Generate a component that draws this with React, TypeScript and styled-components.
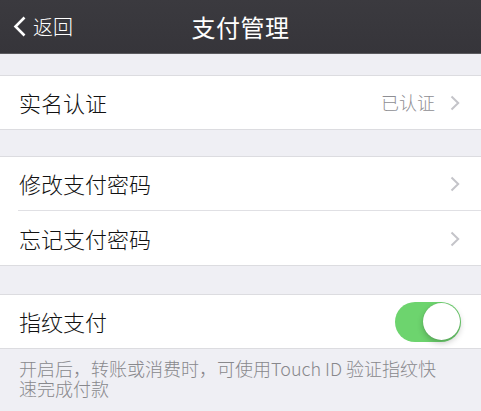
import React from "react";
import styled, { createGlobalStyle } from "styled-components";

const GlobalStyle = createGlobalStyle`
  html, body {
    margin: 0;
    padding: 0;
    background: #efeff4;
    font-family: "Noto Sans CJK SC", "Noto Sans", sans-serif;
  }
`;

const Page = styled.div`
  width: 481px;
  min-height: 411px;
  background: #efeff4;
  overflow: hidden;
`;

const NavBar = styled.div`
  height: 53px;
  background: linear-gradient(#3b3a3f, #36353a);
  border-bottom: 1px solid #5b5b5f;
  display: flex;
  align-items: center;
  justify-content: center;
  position: relative;
`;

const BackButton = styled.div`
  position: absolute;
  left: 13px;
  top: 0;
  bottom: 0;
  display: flex;
  align-items: center;
  gap: 6px;
  color: #ffffff;
  font-size: 20px;
  font-weight: 300;
`;

const Title = styled.div`
  color: #ffffff;
  font-size: 24px;
  font-weight: 400;
  letter-spacing: 0.5px;
`;

const Group = styled.div<{ $gap: number }>`
  margin-top: ${({ $gap }) => $gap}px;
  background: #ffffff;
  box-shadow: inset 0 1px 0 #dcdce0, inset 0 -1px 0 #dcdce0;
`;

const Row = styled.div<{ $divider?: boolean }>`
  height: 55px;
  padding: 0 21px 0 19px;
  display: flex;
  align-items: center;
  position: relative;
  ${({ $divider }) =>
    $divider &&
    `
    &::after {
      content: "";
      position: absolute;
      left: 18px;
      right: 0;
      bottom: 0;
      height: 1px;
      background: #e0e0e4;
    }
  `}
`;

const Label = styled.div`
  flex: 1;
  font-size: 22px;
  font-weight: 300;
  color: #111111;
  margin-top: -2px;
`;

const Detail = styled.div`
  font-size: 18px;
  font-weight: 300;
  color: #8e8e93;
  margin-right: 15px;
  margin-top: -2px;
`;

const Toggle = styled.div<{ $on: boolean }>`
  width: 66px;
  height: 40px;
  border-radius: 20px;
  background: ${({ $on }) => ($on ? "#6dd46e" : "#e5e5ea")};
  position: relative;
  margin-right: -1px;
`;

const Knob = styled.div<{ $on: boolean }>`
  position: absolute;
  top: 1px;
  left: ${({ $on }) => ($on ? "28px" : "1px")};
  width: 37px;
  height: 37px;
  border-radius: 50%;
  background: #ffffff;
  box-shadow: 0 3px 6px rgba(0, 0, 0, 0.22), 0 0 1px rgba(0, 0, 0, 0.2);
`;

const Footer = styled.div`
  padding: 9px 36px 0 19px;
  font-size: 18px;
  font-weight: 300;
  line-height: 20px;
  color: #88888c;
`;

const Chevron = () => (
  <svg width="10" height="16" viewBox="0 0 10 16">
    <path d="M1.5 1.5 L8.2 8 L1.5 14.5" fill="none" stroke="#c4c4c9" strokeWidth="2" />
  </svg>
);

const BackChevron = () => (
  <svg width="14" height="21" viewBox="0 0 14 21">
    <path d="M11.5 1.5 L2.5 10.5 L11.5 19.5" fill="none" stroke="#ffffff" strokeWidth="2.6" />
  </svg>
);

export default function App() {
  const [touchId, setTouchId] = React.useState(true);
  return (
    <Page>
      <GlobalStyle />
      <NavBar>
        <BackButton>
          <BackChevron />
          <span>返回</span>
        </BackButton>
        <Title>支付管理</Title>
      </NavBar>

      <Group $gap={21}>
        <Row>
          <Label>实名认证</Label>
          <Detail>已认证</Detail>
          <Chevron />
        </Row>
      </Group>

      <Group $gap={26}>
        <Row $divider>
          <Label>修改支付密码</Label>
          <Chevron />
        </Row>
        <Row>
          <Label>忘记支付密码</Label>
          <Chevron />
        </Row>
      </Group>

      <Group $gap={28}>
        <Row>
          <Label>指纹支付</Label>
          <Toggle $on={touchId} onClick={() => setTouchId(!touchId)}>
            <Knob $on={touchId} />
          </Toggle>
        </Row>
      </Group>

      <Footer>开启后，转账或消费时，可使用Touch ID 验证指纹快速完成付款</Footer>
    </Page>
  );
}
